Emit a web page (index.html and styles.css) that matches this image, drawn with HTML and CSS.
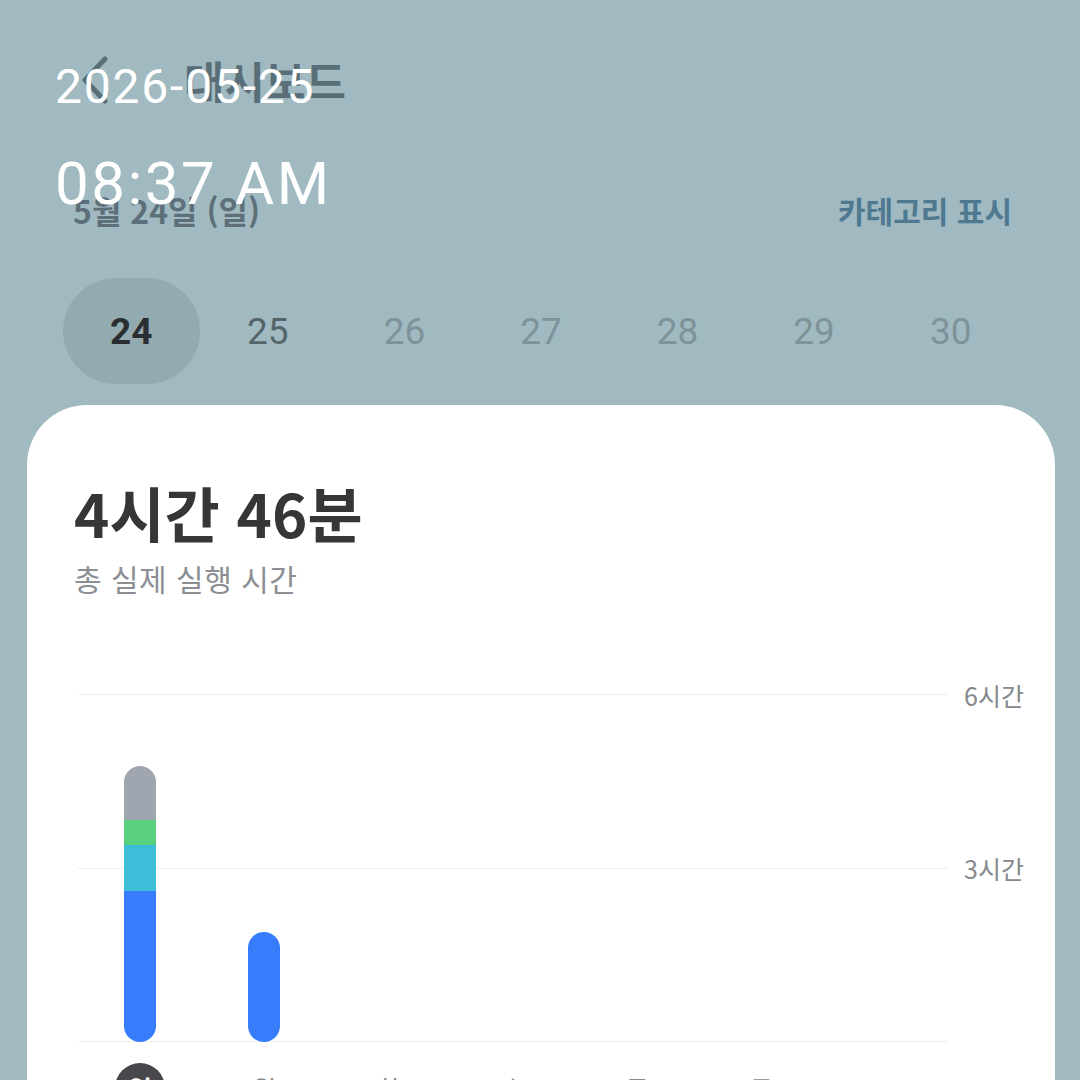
FILE: index.html
```html
<!DOCTYPE html>
<html lang="ko">
<head>
  <meta charset="UTF-8" />
  <meta name="viewport" content="width=device-width, initial-scale=1.0" />
  <title>대시보드</title>
  <link rel="stylesheet" href="styles.css">
</head>
<body>
  <div class="screen">
    <header class="topbar">
      <svg class="back" width="26" height="48" viewBox="0 0 26 48">
        <polyline points="23,3 3,24 23,45" fill="none" stroke="#5a6e78" stroke-width="5" stroke-linecap="round" stroke-linejoin="round" />
      </svg>
      <h1>대시보드</h1>
    </header>

    <div class="subbar">
      <span class="today">5월 24일 (일)</span>
      <span class="category">카테고리 표시</span>
    </div>

    <div class="days">
      <div class="day selected">24</div>
      <div class="day next">25</div>
      <div class="day">26</div>
      <div class="day">27</div>
      <div class="day">28</div>
      <div class="day">29</div>
      <div class="day">30</div>
    </div>

    <section class="card">
      <h2 class="total">4시간 46분</h2>
      <p class="total-label">총 실제 실행 시간</p>

      <div class="chart">
        <div class="plot">
          <div class="grid">
            <div class="gridline"><span class="line"></span><span class="label">6시간</span></div>
            <div class="gridline"><span class="line"></span><span class="label">3시간</span></div>
            <div class="gridline"><span class="line"></span><span class="label"></span></div>
          </div>
          <div class="bars">
            <!-- heights are minutes out of 360 -->
            <div class="col">
              <div class="bar" style="height: 79.44%">
                <div class="seg gray" style="height: 19.58%"></div>
                <div class="seg green" style="height: 9.09%"></div>
                <div class="seg cyan" style="height: 16.78%"></div>
                <div class="seg blue" style="height: 54.55%"></div>
              </div>
            </div>
            <div class="col">
              <div class="bar" style="height: 31.67%">
                <div class="seg blue" style="height: 100%"></div>
              </div>
            </div>
            <div class="col"></div>
            <div class="col"></div>
            <div class="col"></div>
            <div class="col"></div>
            <div class="col"></div>
          </div>
        </div>

        <div class="weekdays">
          <span class="wd active">일</span>
          <span class="wd">월</span>
          <span class="wd">화</span>
          <span class="wd">수</span>
          <span class="wd">목</span>
          <span class="wd">금</span>
          <span class="wd">토</span>
        </div>
      </div>
    </section>

    <div class="clock">
      <div class="clock-date">2026-05-25</div>
      <div class="clock-time">08:37 AM</div>
    </div>
  </div>
</body>
</html>
```

FILE: styles.css
```css
body {
  margin: 0;
  background-color: #a1bac1;
  font-family: 'Noto Sans CJK KR', 'Noto Sans', sans-serif;
  overflow: hidden;
}
.screen {
  position: relative;
  width: 1080px;
  height: 1080px;
  overflow: hidden;
}
.topbar {
  height: 152px;
  display: flex;
  align-items: center;
  padding: 8px 0 0 82px;
  box-sizing: border-box;
}
.back {
  margin-right: 76px;
}
.topbar h1 {
  margin: 0;
  font-size: 44px;
  line-height: 1;
  font-weight: 700;
  color: #5a6e78;
}
.subbar {
  height: 116px;
  display: flex;
  align-items: center;
  justify-content: space-between;
  padding: 0 68px 0 73px;
}
.today {
  font-size: 32px;
  font-weight: 700;
  color: #5d707a;
}
.category {
  font-size: 30px;
  font-weight: 700;
  color: #4e7990;
}
.days {
  display: grid;
  grid-template-columns: repeat(7, 1fr);
  width: 956px;
  margin: 10px 0 0 63px;
}
.day {
  height: 106px;
  display: flex;
  align-items: center;
  justify-content: center;
  font-family: Roboto, 'Noto Sans', sans-serif;
  font-size: 37px;
  color: #7e9399;
  border-radius: 53px;
}
.day.selected {
  background-color: #93aab1;
  color: #2a2e31;
  font-weight: 700;
}
.day.next {
  color: #56656c;
}
.card {
  margin: 21px 25px 0 27px;
  background: #fff;
  border-radius: 60px 60px 0 0;
  padding: 77px 28px 40px 47px;
  min-height: 700px;
}
.total {
  margin: 0;
  font-size: 60px;
  line-height: 1;
  font-weight: 700;
  color: #343638;
}
.total-label {
  margin: 21px 0 0;
  font-size: 30px;
  line-height: 1;
  color: #8b8f93;
  letter-spacing: 0.5px;
}
.chart {
  margin: 101px 0 0 4px;
}
.plot {
  display: grid;
}
.grid, .bars {
  grid-area: 1 / 1;
  height: 348px;
}
.grid {
  display: flex;
  flex-direction: column;
  justify-content: space-between;
}
.gridline {
  height: 1px;
  display: flex;
  align-items: center;
  gap: 16px;
}
.gridline .line {
  flex: 1;
  height: 1px;
  background: #eeeeee;
}
.gridline .label {
  width: 63px;
  font-size: 25px;
  color: #85898d;
  white-space: nowrap;
}
.bars {
  width: 870px;
  display: flex;
  align-items: flex-end;
}
.col {
  flex: 1;
  height: 100%;
  display: flex;
  justify-content: center;
  align-items: flex-end;
}
.bar {
  width: 32px;
  border-radius: 16px;
  overflow: hidden;
  display: flex;
  flex-direction: column;
}
.seg.gray { background: #a0a6b0; }
.seg.green { background: #5ad17f; }
.seg.cyan { background: #3dbed8; }
.seg.blue { background: #367cfb; }
.weekdays {
  width: 870px;
  display: grid;
  grid-template-columns: repeat(7, 1fr);
  justify-items: center;
  margin-top: 21px;
}
.wd {
  width: 50px;
  height: 50px;
  display: flex;
  align-items: center;
  justify-content: center;
  font-size: 26px;
  color: #8a8a8a;
}
.wd.active {
  border-radius: 50%;
  background: #48484c;
  color: #fff;
  font-weight: 700;
}
.clock {
  position: absolute;
  left: 55px;
  top: 63px;
  color: #fff;
  font-family: Roboto, 'Noto Sans', sans-serif;
}
.clock-date {
  font-size: 48px;
  line-height: 1;
  letter-spacing: 1.8px;
}
.clock-time {
  margin-top: 43px;
  font-size: 60px;
  line-height: 1;
  letter-spacing: 2.6px;
}
```
